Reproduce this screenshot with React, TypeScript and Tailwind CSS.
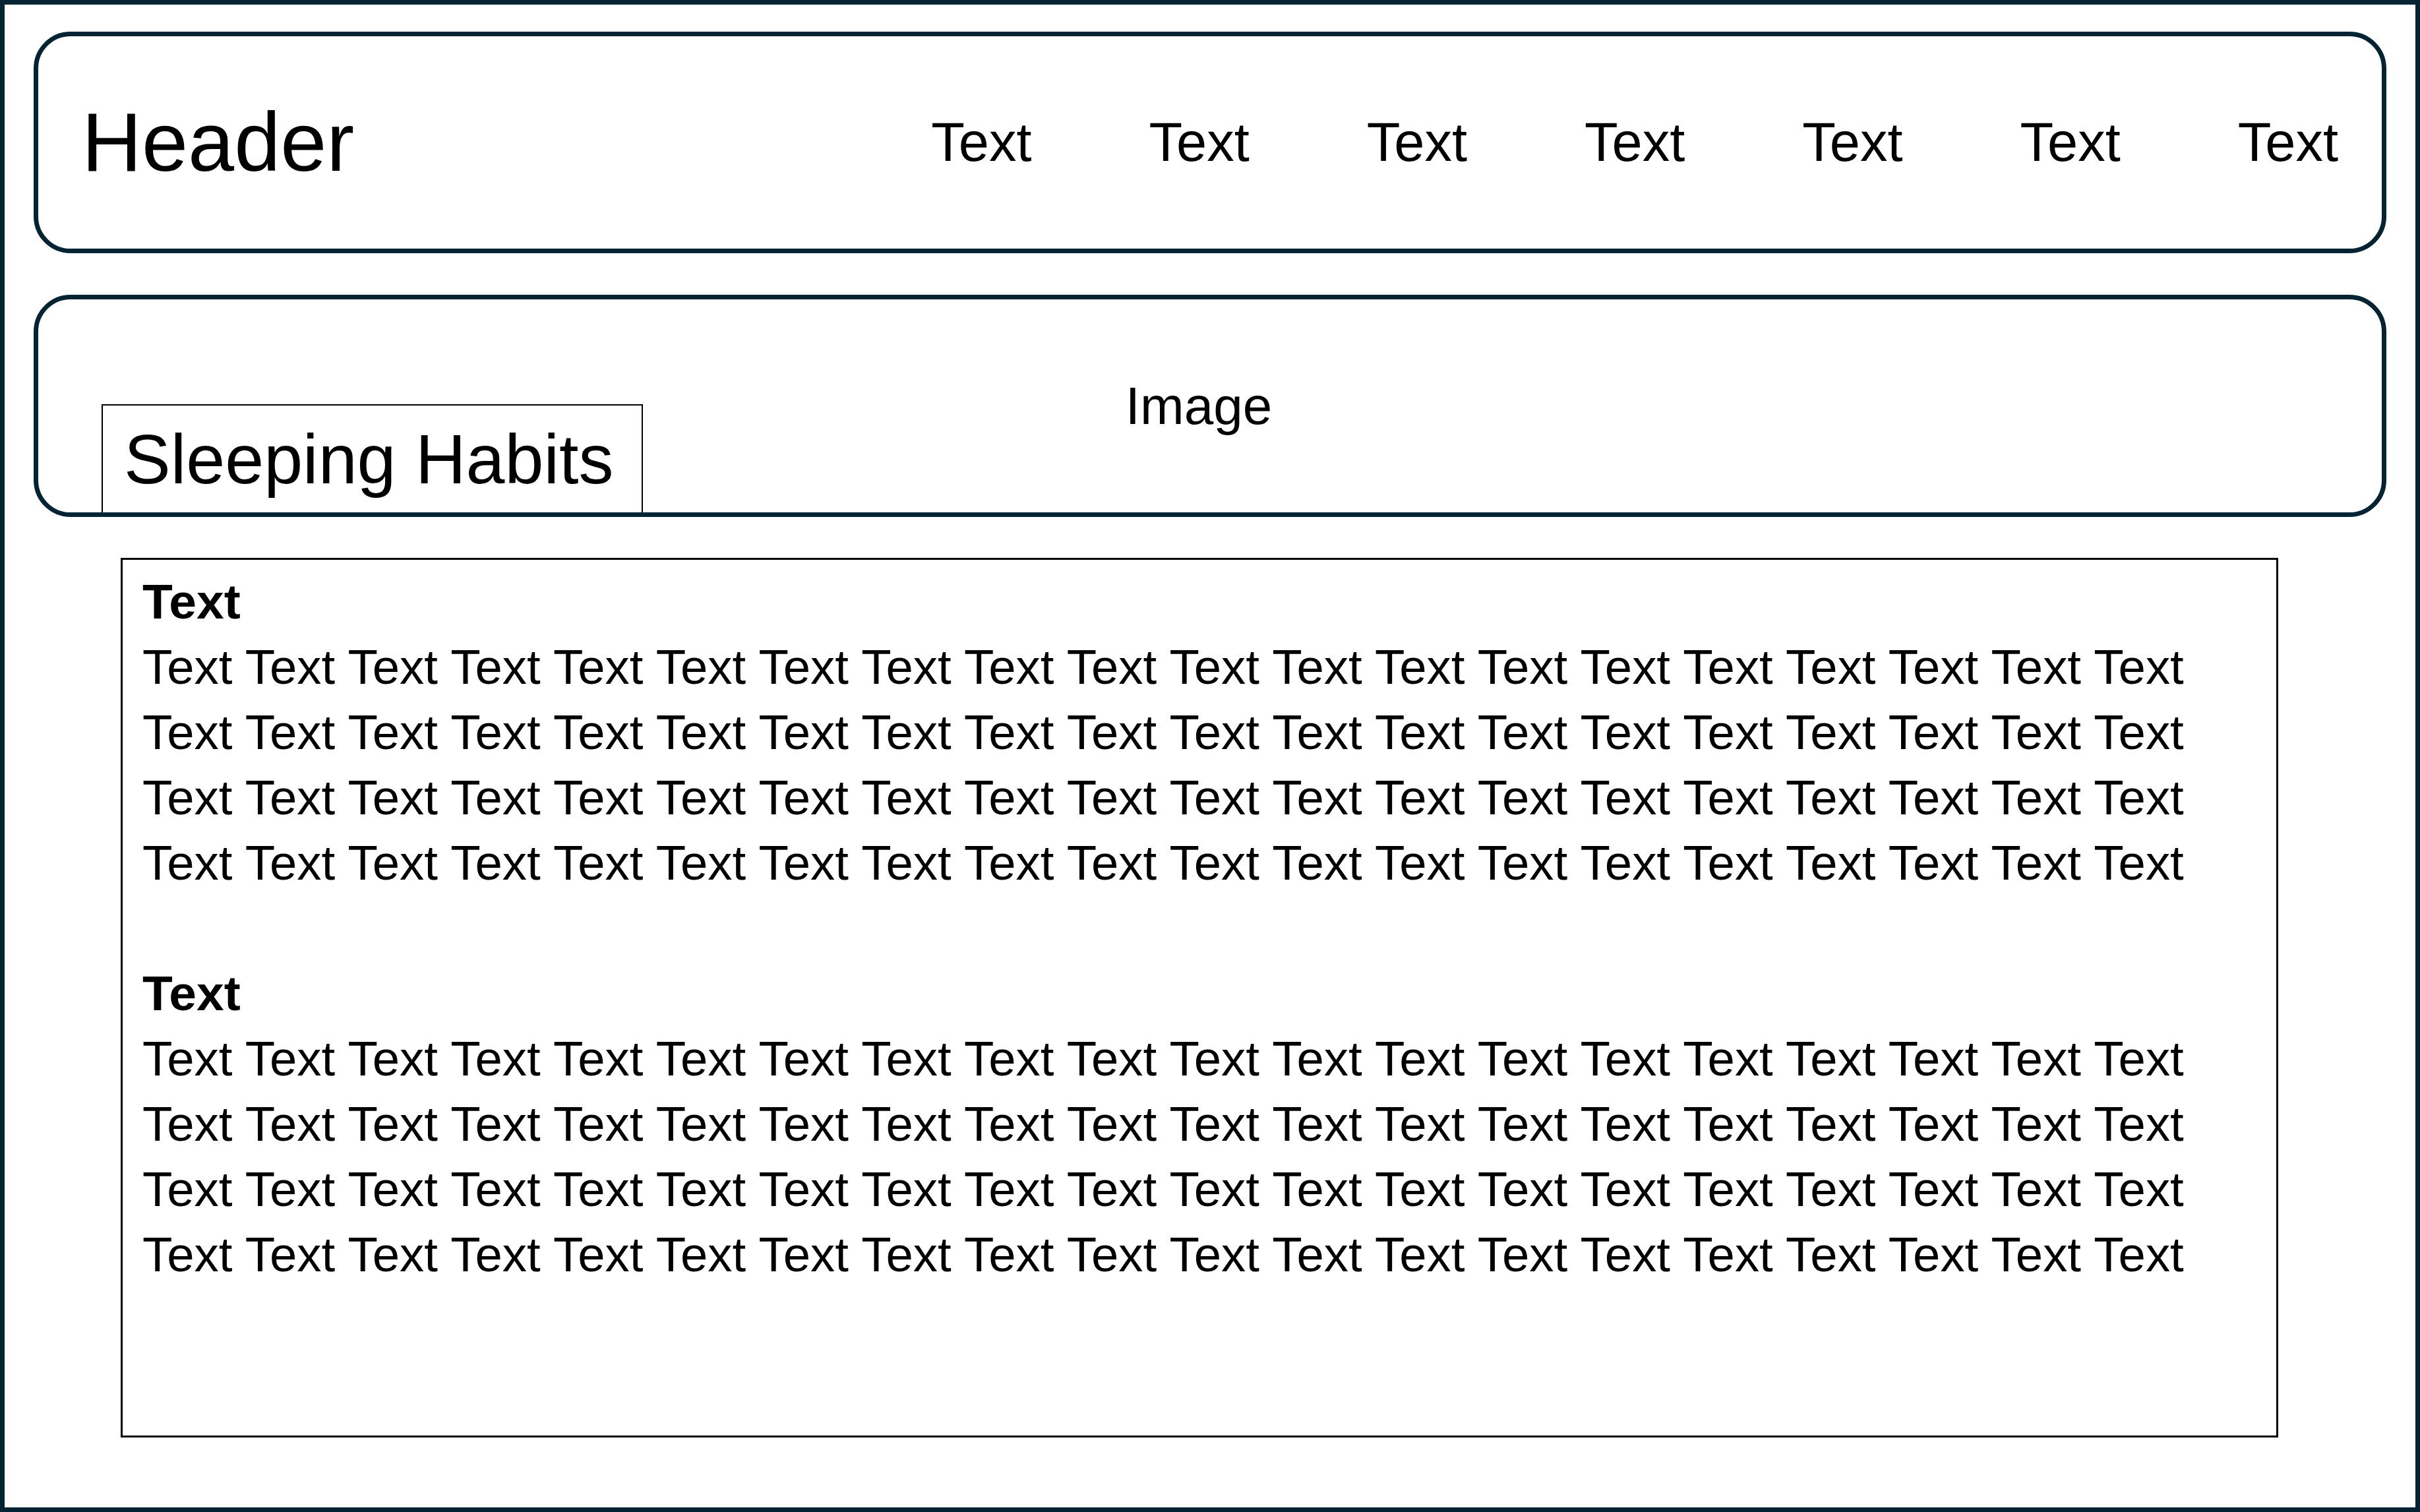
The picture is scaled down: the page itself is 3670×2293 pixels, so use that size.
import React from "react"

const navItems = ["Text", "Text", "Text", "Text", "Text", "Text", "Text"]

const line = Array(20).fill("Text").join(" ")

function Section({ title }: { title: string }) {
  return (
    <div>
      <h2 className="text-[75px] font-bold leading-[99px]">{title}</h2>
      {[0, 1, 2, 3].map((i) => (
        <p key={i} className="text-[74.4px] leading-[99px] whitespace-nowrap">
          {line}
        </p>
      ))}
    </div>
  )
}

export default function App() {
  return (
    <div className="w-full h-[2293px] box-border border-[7px] border-[#052433] bg-white pt-[41px] px-[44px] text-black font-['Liberation_Sans',Arial,sans-serif]">
      {/* top bar */}
      <header className="h-[336px] rounded-[56px] border-[7px] border-[#052433] flex items-center justify-between px-[66px]">
        <h1 className="text-[126px] leading-none">Header</h1>
        <nav className="flex items-center gap-[178px] text-[83px]">
          {navItems.map((t, i) => (
            <span key={i}>{t}</span>
          ))}
        </nav>
      </header>

      {/* hero image block */}
      <section className="relative mt-[63px] h-[337px] rounded-[56px] border-[7px] border-[#052433] flex items-center justify-center pr-[34px]">
        <span className="text-[80px]">Image</span>
        <div className="absolute left-[96px] bottom-0 w-[821px] h-[164px] border-2 border-b-0 border-black bg-white flex items-center pl-[32px]">
          <span className="text-[106px] leading-none whitespace-nowrap">Sleeping Habits</span>
        </div>
      </section>

      {/* content */}
      <main className="mt-[62px] ml-[132px] w-[3272px] h-[1334px] border-[3px] border-black pt-[14px] pl-[30px] overflow-hidden">
        <Section title="Text" />
        <div className="h-[99px]" />
        <Section title="Text" />
      </main>
    </div>
  )
}
